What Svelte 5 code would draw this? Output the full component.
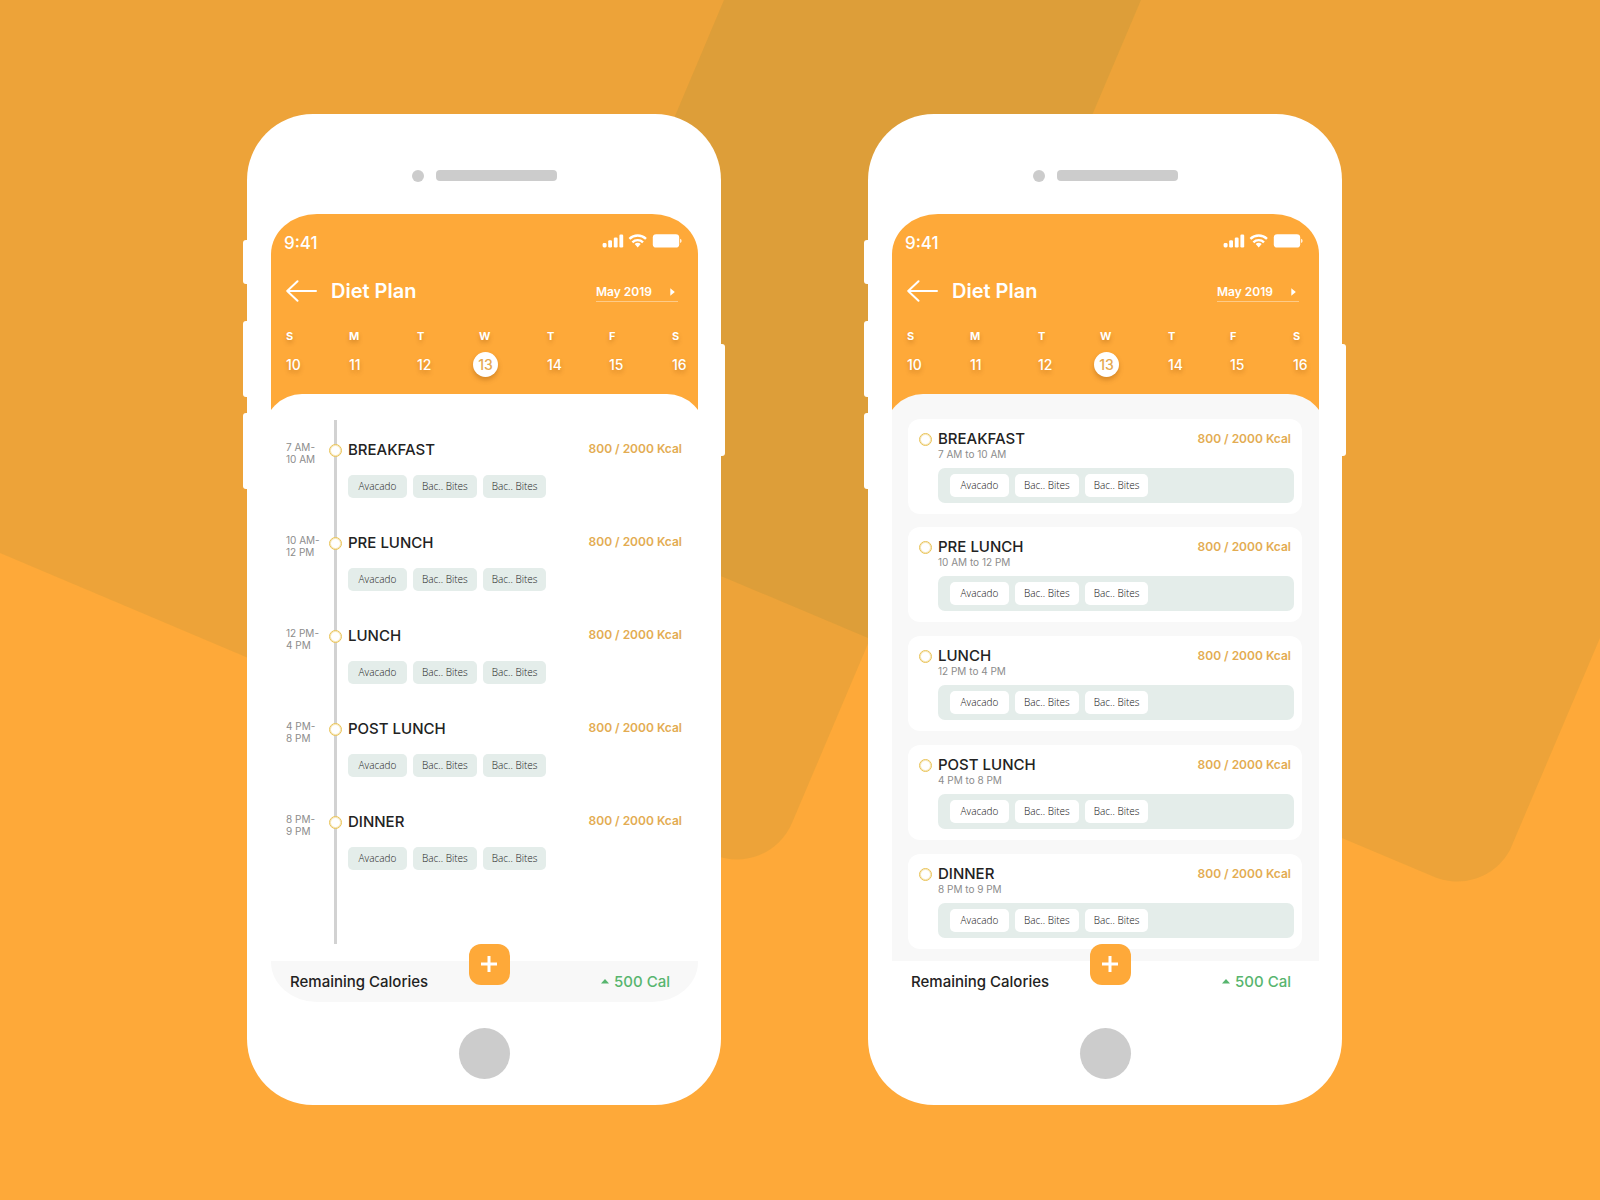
<script>
  const days = [
    { label: 'S', date: 10 },
    { label: 'M', date: 11 },
    { label: 'T', date: 12 },
    { label: 'W', date: 13 },
    { label: 'T', date: 14 },
    { label: 'F', date: 15 },
    { label: 'S', date: 16 }
  ]

  const meals = [
    { name: 'BREAKFAST', from: '7 AM', to: '10 AM' },
    { name: 'PRE LUNCH', from: '10 AM', to: '12 PM' },
    { name: 'LUNCH', from: '12 PM', to: '4 PM' },
    { name: 'POST LUNCH', from: '4 PM', to: '8 PM' },
    { name: 'DINNER', from: '8 PM', to: '9 PM' }
  ]

  const foods = ['Avacado', 'Bac.. Bites', 'Bac.. Bites']

  let selected = $state(13)
</script>

{#snippet chips()}
  <ul class="chips">
    {#each foods as food}
      <li class="chip">{food}</li>
    {/each}
  </ul>
{/snippet}

{#snippet phone(kind)}
  <section class="phone {kind}">
    <i class="key key-mute"></i>
    <i class="key key-up"></i>
    <i class="key key-down"></i>
    <i class="key key-power"></i>

    <div class="earpiece">
      <span class="camera"></span>
      <span class="speaker"></span>
    </div>

    <div class="screen">
      <header class="top">
        <div class="status">
          <span class="clock">9:41</span>
          <svg class="signals" width="80" height="14" viewBox="0 0 80 14" fill="#fff">
            <rect x="0.6" y="9" width="4" height="4.4" rx="1.4" />
            <rect x="6.2" y="6.3" width="3.8" height="7.1" rx="1.2" />
            <rect x="11.8" y="3.6" width="3.8" height="9.8" rx="1.2" />
            <rect x="17.4" y="0.5" width="3.8" height="12.9" rx="1.2" />
            <g fill="none" stroke="#fff" stroke-width="2.4">
              <path d="M27.4 4.9a12 12 0 0 1 16.6 0" />
              <path d="M30.4 8.3a7.6 7.6 0 0 1 10.6 0" />
            </g>
            <path d="M35.7 13.4l-3-3.3a4.2 4.2 0 0 1 6 0z" />
            <rect x="50.8" y="0.2" width="26.4" height="13.4" rx="3.4" />
            <path d="M78.2 4.8c1.8.7 1.8 3.6 0 4.3z" />
          </svg>
        </div>

        <div class="bar">
          <button class="back" aria-label="Back">
            <svg width="31" height="22" viewBox="0 0 31 22" fill="none" stroke="#fff" stroke-width="2" stroke-linecap="round" stroke-linejoin="round"><path d="M30 11H1.2M11.5 1.2L1.2 11l10.3 9.8" /></svg>
          </button>
          <h1 class="title">Diet Plan</h1>
          <button class="month">
            May 2019
            <svg width="5" height="8" viewBox="0 0 5 8" fill="#fff"><path d="M0.3 0.2L4.8 4 0.3 7.8z" /></svg>
          </button>
        </div>

        <div class="week">
          {#each days as day}
            <button class="day" class:active={selected === day.date} onclick={() => (selected = day.date)}>
              <span class="label">{day.label}</span>
              <span class="date">{day.date}</span>
            </button>
          {/each}
        </div>
      </header>

      <main class="sheet">
        {#if kind === 'timeline'}
          <ol class="line">
            {#each meals as meal}
              <li class="row">
                <span class="time">{meal.from}-<br />{meal.to}</span>
                <span class="dot"></span>
                <div class="meal">
                  <div class="head">
                    <h2 class="name">{meal.name}</h2>
                    <span class="kcal">800 / 2000 Kcal</span>
                  </div>
                  {@render chips()}
                </div>
              </li>
            {/each}
          </ol>
        {:else}
          {#each meals as meal}
            <article class="card">
              <span class="dot"></span>
              <div class="meal">
                <div class="head">
                  <h2 class="name">{meal.name}</h2>
                  <span class="kcal">800 / 2000 Kcal</span>
                </div>
                <p class="time">{meal.from} to {meal.to}</p>
                <div class="tray">{@render chips()}</div>
              </div>
            </article>
          {/each}
        {/if}
      </main>

      <footer class="remaining">
        <span>Remaining Calories</span>
        <button class="add" aria-label="Add meal">
          <svg width="18" height="18" viewBox="0 0 18 18" stroke="#fff" stroke-width="3"><path d="M9 1v16M1 9h16" /></svg>
        </button>
        <span class="cal">
          <svg width="8" height="5" viewBox="0 0 8 5" fill="currentColor"><path d="M4 0l4 4.6H0z" /></svg>
          500 Cal
        </span>
      </footer>
    </div>

    <button class="home" aria-label="Home"></button>
  </section>
{/snippet}

<div class="page">
  <svg class="backdrop" viewBox="0 0 1600 1200" preserveAspectRatio="xMidYMid slice" aria-hidden="true">
    <path d="M0 0H1141L792 823A60 60 0 0 1 714 855L0 553z" />
    <path d="M724 0H1600V638L1510 850A60 60 0 0 1 1432 876L517 490z" />
  </svg>
  {@render phone('timeline')}
  {@render phone('cards')}
</div>

<style>
  :global(body) { margin: 0; }
  .page { position: relative; min-height: 100vh; box-sizing: border-box; padding: 18px 11px 0 0; background: #fea939; display: flex; align-items: center; justify-content: center; gap: 147px; overflow: hidden; font-family: Inter, 'Open Sans', sans-serif; color: #222; }
  .backdrop { position: absolute; inset: 0; width: 100%; height: 100%; fill: rgba(84, 114, 62, 0.1); }
  button { font: inherit; color: inherit; background: none; border: none; padding: 0; cursor: pointer; }
  h1, h2, p, ul, ol { margin: 0; padding: 0; list-style: none; }
  svg { display: block; }

  .phone { position: relative; flex: 0 1 474px; box-sizing: border-box; padding: 56px 23px 26px 24px; background: #fff; border-radius: 66px; display: flex; flex-direction: column; align-items: center; }
  .key { position: absolute; left: -4px; width: 8px; background: #fff; border-radius: 3px; }
  .key-mute { top: 126px; height: 44px; }
  .key-up { top: 207px; height: 76px; }
  .key-down { top: 299px; height: 76px; }
  .key-power { top: 230px; height: 112px; left: auto; right: -4px; }
  .earpiece { display: flex; align-items: center; gap: 12px; margin-bottom: 32px; }
  .camera { width: 12px; height: 12px; border-radius: 50%; background: #ccc; }
  .speaker { width: 121px; height: 11px; border-radius: 4px; background: #ccc; }
  .home { width: 51px; height: 51px; margin-top: 26px; border-radius: 50%; background: #ccc; }

  .screen { width: 100%; border-radius: 46px / 40px; overflow: hidden; }
  .top { color: #fff; background: #fea939; padding-bottom: 55px; }
  .status { display: flex; justify-content: space-between; align-items: center; padding: 17px 16px 0 13px; }
  .clock { font-size: 17px; line-height: 24px; font-weight: 500; }
  .signals { margin-bottom: 4px; }
  .bar { display: flex; align-items: center; padding: 23px 20px 0 15px; }
  .title { font-size: 20px; line-height: 26px; font-weight: 600; margin-left: 14px; }
  .month { display: flex; align-items: center; justify-content: space-between; width: 82px; margin-left: auto; padding: 4px 3px 1px 0; font-size: 12px; line-height: 16px; font-weight: 600; border-bottom: 1px solid rgba(255, 255, 255, 0.4); white-space: nowrap; }
  .week { display: grid; grid-template-columns: 63fr 68fr 62fr 68fr 62fr 63fr 26fr; padding: 24px 0 0 15px; }
  .day { display: flex; flex-direction: column; align-items: flex-start; gap: 8px; text-shadow: 0 3px 4px rgba(120, 60, 0, 0.3); }
  .label { font-size: 11px; line-height: 16px; font-weight: 700; }
  .date { font-size: 14px; line-height: 25px; font-weight: 500; }
  .active .date { width: 25px; margin-left: -6px; text-align: center; border-radius: 50%; background: #fff; color: #e5a850; text-shadow: none; box-shadow: 0 3px 5px rgba(120, 60, 0, 0.3); }

  .sheet { position: relative; height: 567px; margin: -38px -7px 0; box-sizing: border-box; border-radius: 38px 38px 0 0; background: #fff; }
  .timeline .sheet { padding: 26px 23px 17px 22px; }
  .cards .sheet { padding: 25px 24px 12px 23px; background: #f8f8f8; display: flex; flex-direction: column; justify-content: space-between; }

  .line { height: 100%; padding-top: 17px; box-sizing: border-box; background: linear-gradient(#d2d2d2, #d2d2d2) 48px 0 / 3px 100% no-repeat; }
  .row { display: grid; grid-template-columns: 43px 13px 1fr; height: 93px; align-items: start; }
  .time { font-size: 10px; line-height: 12px; color: #8c8c8c; white-space: nowrap; }
  .row .time { padding-top: 4px; }
  .row .dot { margin-top: 7px; }
  .dot { width: 13px; height: 13px; box-sizing: border-box; border: 1px solid #e9c254; border-radius: 50%; background: #fff; box-shadow: inset 0 0 0 1px rgba(233, 194, 84, 0.4); }
  .meal { flex: 1; min-width: 0; padding-left: 6px; }
  .head { display: flex; justify-content: space-between; align-items: flex-start; }
  .name { font-size: 15px; line-height: 26px; font-weight: 500; }
  .kcal { font-size: 12px; line-height: 24px; font-weight: 600; color: #e3ac52; }
  .chips { display: flex; gap: 6px; }
  .row .chips { margin-top: 12px; }
  .chip { min-width: 59px; box-sizing: border-box; padding: 0 9px; font-family: 'Open Sans', sans-serif; font-size: 10px; line-height: 23px; font-weight: 300; text-align: center; background: #e4edea; border-radius: 5px; white-space: nowrap; }

  .card { display: flex; padding: 11px 8px 11px 11px; background: #fff; border-radius: 12px; }
  .card .dot { margin-top: 3px; }
  .card .head { padding-right: 3px; }
  .card .name, .card .kcal { line-height: 18px; }
  .card .time { margin-bottom: 8px; }
  .tray { padding: 6px 12px; background: #e4edea; border-radius: 7px; }
  .tray .chip { background: #fff; color: #111; }

  .remaining { position: relative; display: flex; justify-content: space-between; align-items: center; padding: 0 28px 0 19px; background: #f8f8f8; font-size: 15px; line-height: 41px; font-weight: 500; }
  .cards .remaining { background: #fff; }
  .add { position: absolute; top: -17px; left: calc(50% - 16px); width: 41px; height: 41px; border-radius: 12px; background: #fea939; display: flex; align-items: center; justify-content: center; }
  .cal { display: flex; align-items: center; gap: 5px; color: #57b56e; }
</style>
